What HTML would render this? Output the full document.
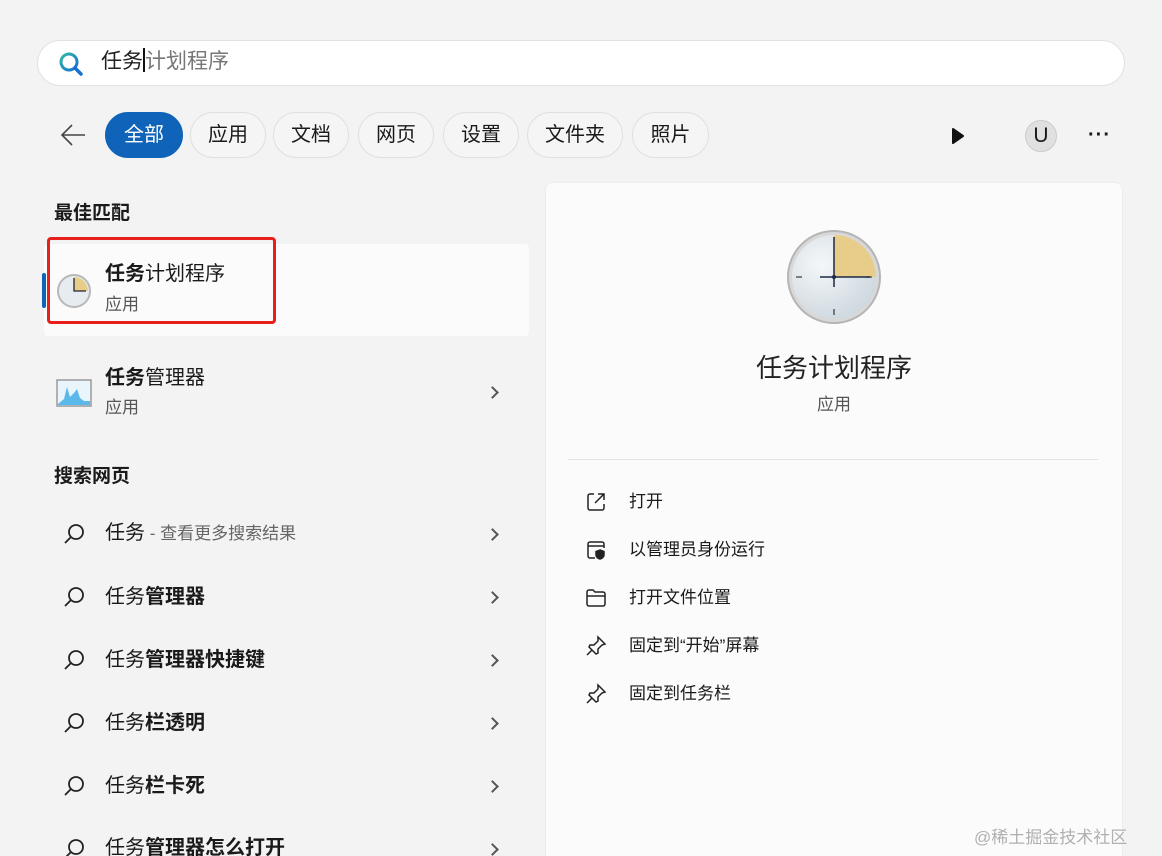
<!DOCTYPE html>
<html><head><meta charset="utf-8"><style>
*{margin:0;padding:0;box-sizing:border-box}
html{width:1162px;height:856px;overflow:hidden}
body{width:1162px;height:856px;overflow:hidden;background:#f3f3f3;font-family:"Liberation Sans","Noto Sans CJK SC",sans-serif;color:#1a1a1a;position:relative}
.a{position:absolute}
.search{left:37px;top:40px;width:1088px;height:46px;background:#fff;border:1px solid #e2e2e2;border-radius:23px}
.tab{position:absolute;top:112px;height:46px;border:1px solid #e0e0e0;border-radius:23px;background:#f5f5f5;font-size:20px;line-height:44px;text-align:center;color:#1a1a1a}
.sec{font-size:19px;font-weight:bold;left:54px}
.row{position:absolute;left:105px;font-size:20px;line-height:28px}
.chev{position:absolute;left:488px;width:9px;height:9px;border-right:2px solid #555;border-top:2px solid #555;transform:rotate(45deg)}
.act{position:absolute;left:629px;font-size:17px;line-height:24px}
</style></head><body>
<div class="a search"></div>
<svg class="a" style="left:57px;top:50px" width="28" height="28" viewBox="0 0 28 28"><defs><linearGradient id="g" x1="0" y1="0" x2="1" y2="1"><stop offset="0" stop-color="#2fb8a8"/><stop offset="1" stop-color="#1a6fd0"/></linearGradient></defs><circle cx="12" cy="12" r="8" fill="none" stroke="url(#g)" stroke-width="3"/><line x1="18" y1="18" x2="24" y2="24" stroke="#1a6fd0" stroke-width="3.5" stroke-linecap="round"/></svg>
<div class="a" style="left:101px;top:48px;font-size:21px;line-height:28px"><span style="color:#222">任务</span><span style="display:inline-block;width:2px;height:24px;background:#111;vertical-align:-4px"></span><span style="color:#777">计划程序</span></div>
<svg class="a" style="left:58px;top:122px" width="30" height="26" viewBox="0 0 30 26"><path d="M27 13H4M14 3L4 13l10 10" fill="none" stroke="#444" stroke-width="1.6"/></svg>
<div class="tab" style="left:105px;width:78px;background:#0f63b8;border-color:#0f63b8;color:#fff">全部</div>
<div class="tab" style="left:190px;width:76px">应用</div>
<div class="tab" style="left:273px;width:76px">文档</div>
<div class="tab" style="left:358px;width:76px">网页</div>
<div class="tab" style="left:443px;width:76px">设置</div>
<div class="tab" style="left:527px;width:96px">文件夹</div>
<div class="tab" style="left:632px;width:77px">照片</div>
<svg class="a" style="left:950px;top:127px" width="16" height="18" viewBox="0 0 16 18"><path d="M3 2L13 9L3 16Z" fill="#111" stroke="#111" stroke-linejoin="round" stroke-width="2"/></svg>
<div class="a" style="left:1025px;top:120px;width:32px;height:32px;border-radius:50%;background:#e0e0e0;border:1px solid #ccc;text-align:center;line-height:30px;font-size:21px">U</div>
<div class="a" style="left:1088px;top:127px;font-size:20px;letter-spacing:1px;line-height:16px;font-weight:bold">···</div>

<div class="a sec" style="top:198px">最佳匹配</div>
<div class="a" style="left:44px;top:244px;width:485px;height:92px;background:#fbfbfb;border-radius:4px"></div>
<div class="a" style="left:42px;top:273px;width:4px;height:35px;background:#0f63b8;border-radius:2px"></div>
<div class="a" style="left:47px;top:237px;width:229px;height:87px;border:3px solid #e8201d;border-radius:4px"></div>
<svg class="a" style="left:56px;top:273px" width="36" height="36" viewBox="0 0 36 36"><circle cx="18" cy="18" r="16" fill="#e6ecf0" stroke="#b8b8b8" stroke-width="2"/><path d="M18 18V4A14 14 0 0 1 32 18Z" fill="#e8cd8a"/><path d="M18 5V18H30" fill="none" stroke="#223" stroke-width="1.3"/></svg>
<div class="row" style="top:260px"><b>任务</b>计划程序</div>
<div class="row" style="top:291px;font-size:17px;color:#555">应用</div>

<svg class="a" style="left:56px;top:379px" width="36" height="28" viewBox="0 0 36 28"><rect x="1" y="1" width="34" height="26" fill="#eaf4fb" stroke="#999" stroke-width="1.5"/><path d="M2 25L8 20L11 8L14 18L18 14L21 10L24 19L28 22L34 22V26H2Z" fill="#5ab8ea"/></svg>
<div class="row" style="top:364px"><b>任务</b>管理器</div>
<div class="row" style="top:394px;font-size:17px;color:#555">应用</div>
<div class="chev" style="top:388px"></div>

<div class="a sec" style="top:461px">搜索网页</div>

<svg class="a" style="left:62px;top:522px" width="24" height="24" viewBox="0 0 24 24"><circle cx="14" cy="10" r="7" fill="none" stroke="#222" stroke-width="1.8"/><line x1="9" y1="15" x2="3" y2="21" stroke="#222" stroke-width="1.8"/></svg>
<div class="row" style="top:519px">任务<span style="font-size:17px;color:#666"> - 查看更多搜索结果</span></div>
<div class="chev" style="top:530px"></div>
<svg class="a" style="left:62px;top:585px" width="24" height="24" viewBox="0 0 24 24"><circle cx="14" cy="10" r="7" fill="none" stroke="#222" stroke-width="1.8"/><line x1="9" y1="15" x2="3" y2="21" stroke="#222" stroke-width="1.8"/></svg>
<div class="row" style="top:583px">任务<b>管理器</b></div>
<div class="chev" style="top:593px"></div>
<svg class="a" style="left:62px;top:648px" width="24" height="24" viewBox="0 0 24 24"><circle cx="14" cy="10" r="7" fill="none" stroke="#222" stroke-width="1.8"/><line x1="9" y1="15" x2="3" y2="21" stroke="#222" stroke-width="1.8"/></svg>
<div class="row" style="top:646px">任务<b>管理器快捷键</b></div>
<div class="chev" style="top:656px"></div>
<svg class="a" style="left:62px;top:711px" width="24" height="24" viewBox="0 0 24 24"><circle cx="14" cy="10" r="7" fill="none" stroke="#222" stroke-width="1.8"/><line x1="9" y1="15" x2="3" y2="21" stroke="#222" stroke-width="1.8"/></svg>
<div class="row" style="top:709px">任务<b>栏透明</b></div>
<div class="chev" style="top:719px"></div>
<svg class="a" style="left:62px;top:774px" width="24" height="24" viewBox="0 0 24 24"><circle cx="14" cy="10" r="7" fill="none" stroke="#222" stroke-width="1.8"/><line x1="9" y1="15" x2="3" y2="21" stroke="#222" stroke-width="1.8"/></svg>
<div class="row" style="top:772px">任务<b>栏卡死</b></div>
<div class="chev" style="top:782px"></div>
<svg class="a" style="left:62px;top:837px" width="24" height="24" viewBox="0 0 24 24"><circle cx="14" cy="10" r="7" fill="none" stroke="#222" stroke-width="1.8"/><line x1="9" y1="15" x2="3" y2="21" stroke="#222" stroke-width="1.8"/></svg>
<div class="row" style="top:834px">任务<b>管理器怎么打开</b></div>
<div class="chev" style="top:845px"></div>

<div class="a" style="left:545px;top:182px;width:578px;height:674px;background:#fbfbfb;border-radius:8px 8px 0 0;border:1px solid #ededed;border-bottom:none"></div>
<svg class="a" style="left:786px;top:229px" width="96" height="96" viewBox="0 0 96 96"><defs><radialGradient id="f" cx=".35" cy=".35" r=".8"><stop offset="0" stop-color="#f4f7f9"/><stop offset="1" stop-color="#c9d4dc"/></radialGradient></defs><circle cx="48" cy="48" r="46" fill="#d8d8d8" stroke="#b5b5b5" stroke-width="2"/><circle cx="48" cy="48" r="42" fill="url(#f)"/><path d="M48 48V6A42 42 0 0 1 90 48Z" fill="#e8cd8a"/><g stroke="#444" stroke-width="1.3"><line x1="48" y1="80" x2="48" y2="86"/><line x1="10" y1="48" x2="16" y2="48"/><line x1="80" y1="48" x2="86" y2="48"/></g><path d="M48 8V58M34 48H84" stroke="#1a2a44" stroke-width="1.5"/><circle cx="48" cy="48" r="2" fill="#1a2a44"/></svg>
<div class="a" style="left:545px;width:578px;top:350px;text-align:center;font-size:26px;line-height:36px;color:#222">任务计划程序</div>
<div class="a" style="left:545px;width:578px;top:393px;text-align:center;font-size:17px;line-height:24px;color:#555">应用</div>
<div class="a" style="left:568px;top:459px;width:530px;height:1px;background:#e3e3e3"></div>

<svg class="a" style="left:585px;top:491px" width="22" height="22" viewBox="0 0 22 22" fill="none" stroke="#222" stroke-width="1.5"><path d="M9 3H5a2 2 0 0 0-2 2v12a2 2 0 0 0 2 2h12a2 2 0 0 0 2-2v-4M13 3h6v6M19 3l-9 9"/></svg>
<div class="act" style="top:490px">打开</div>
<svg class="a" style="left:585px;top:539px" width="22" height="22" viewBox="0 0 22 22" fill="none" stroke="#222" stroke-width="1.5"><path d="M10 19H5a2 2 0 0 1-2-2V5a2 2 0 0 1 2-2h12a2 2 0 0 1 2 2v4M3 7h16"/><path d="M15 11l4 1.5v3.5c0 2-2 3.5-4 4c-2-.5-4-2-4-4v-3.5z" fill="#222"/></svg>
<div class="act" style="top:538px">以管理员身份运行</div>
<svg class="a" style="left:585px;top:587px" width="22" height="22" viewBox="0 0 22 22" fill="none" stroke="#222" stroke-width="1.5"><path d="M2 5a2 2 0 0 1 2-2h4l2 2h8a2 2 0 0 1 2 2v10a2 2 0 0 1-2 2H4a2 2 0 0 1-2-2zM2 9h18"/></svg>
<div class="act" style="top:586px">打开文件位置</div>
<svg class="a" style="left:585px;top:635px" width="22" height="22" viewBox="0 0 22 22" fill="none" stroke="#222" stroke-width="1.5"><path d="M13 2l7 7-3 1-4 4v4l-2 1-7-7 1-2h4l4-4zM7 15l-5 5"/></svg>
<div class="act" style="top:634px">固定到“开始”屏幕</div>
<svg class="a" style="left:585px;top:683px" width="22" height="22" viewBox="0 0 22 22" fill="none" stroke="#222" stroke-width="1.5"><path d="M13 2l7 7-3 1-4 4v4l-2 1-7-7 1-2h4l4-4zM7 15l-5 5"/></svg>
<div class="act" style="top:682px">固定到任务栏</div>

<div class="a" style="left:974px;top:823px;font-size:17px;color:#b0b0b0">@稀土掘金技术社区</div>
</body></html>
